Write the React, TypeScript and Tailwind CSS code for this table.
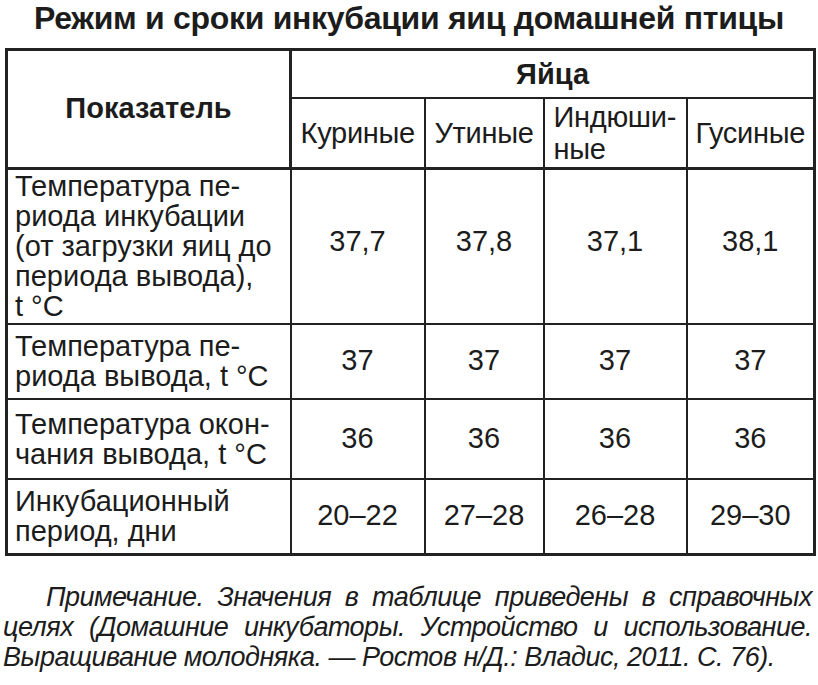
const rows = [
  {
    label: "Температура пе-\nриода инкубации\n(от загрузки яиц до\nпериода вывода),\nt °C",
    values: ["37,7", "37,8", "37,1", "38,1"],
    h: "h-[155px]",
    pad: "pb-[10px]",
  },
  {
    label: "Температура пе-\nриода вывода, t °C",
    values: ["37", "37", "37", "37"],
    h: "h-[75px]",
    pad: "pb-[2px]",
  },
  {
    label: "Температура окон-\nчания вывода, t °C",
    values: ["36", "36", "36", "36"],
    h: "h-[80px]",
    pad: "pb-[2px]",
  },
  {
    label: "Инкубационный\nпериод, дни",
    values: ["20–22", "27–28", "26–28", "29–30"],
    h: "h-[76px]",
    pad: "pb-[2px]",
  },
];

export default function App() {
  return (
    <div className="w-[818px] h-[685px] bg-white text-[#1c1c1c] font-['Liberation_Sans',Arial,sans-serif] overflow-hidden">
      <h1 className="pt-[1px] text-center text-[32px] font-bold leading-[34px] tracking-[-0.3px]">
        Режим и сроки инкубации яиц домашней птицы
      </h1>

      <table className="mt-[13px] ml-[5px] w-[808px] table-fixed border-collapse border-[3px] border-[#222] text-[29px] leading-[30px]">
        <colgroup>
          <col className="w-[284px]" />
          <col className="w-[134px]" />
          <col className="w-[119px]" />
          <col className="w-[143px]" />
          <col className="w-[128px]" />
        </colgroup>
        <thead>
          <tr className="h-[48px]">
            <th
              rowSpan={2}
              className="border-[3px] border-[#222] text-center align-middle font-bold text-[29px] pb-[2px]"
            >
              Показатель
            </th>
            <th colSpan={4} className="border-2 border-[#222] text-center font-bold text-[29px]">
              Яйца
            </th>
          </tr>
          <tr className="h-[71px]">
            <th className="border-2 border-b-[3px] border-[#222] font-normal text-center px-0 tracking-[-0.3px]">Куриные</th>
            <th className="border-2 border-b-[3px] border-[#222] font-normal text-center px-0 tracking-[-0.3px]">Утиные</th>
            <th className="border-2 border-b-[3px] border-[#222] font-normal text-left pl-[9px] leading-[32px] tracking-[-0.3px]">
              Индюши-
              <br />
              ные
            </th>
            <th className="border-2 border-b-[3px] border-[#222] font-normal text-center px-0 tracking-[-0.3px]">Гусиные</th>
          </tr>
        </thead>
        <tbody>
          {rows.map((r) => (
            <tr key={r.label} className={r.h}>
              <td className="border-2 border-[#222] pl-[7px] pr-0 align-middle whitespace-pre-line">
                {r.label}
              </td>
              {r.values.map((v, i) => (
                <td key={i} className={`border-2 border-[#222] text-center align-middle ${r.pad}`}>
                  {v}
                </td>
              ))}
            </tr>
          ))}
        </tbody>
      </table>

      <p className="mt-[26px] pl-[3px] pr-[6px] text-[27px] leading-[30px] italic text-justify indent-[43px] tracking-[-0.5px]">
        Примечание. Значения в таблице приведены в справочных целях (Домашние инкубаторы. Устройство и использование. Выращивание молодняка. — Ростов н/Д.: Владис, 2011. С. 76).
      </p>
    </div>
  );
}
